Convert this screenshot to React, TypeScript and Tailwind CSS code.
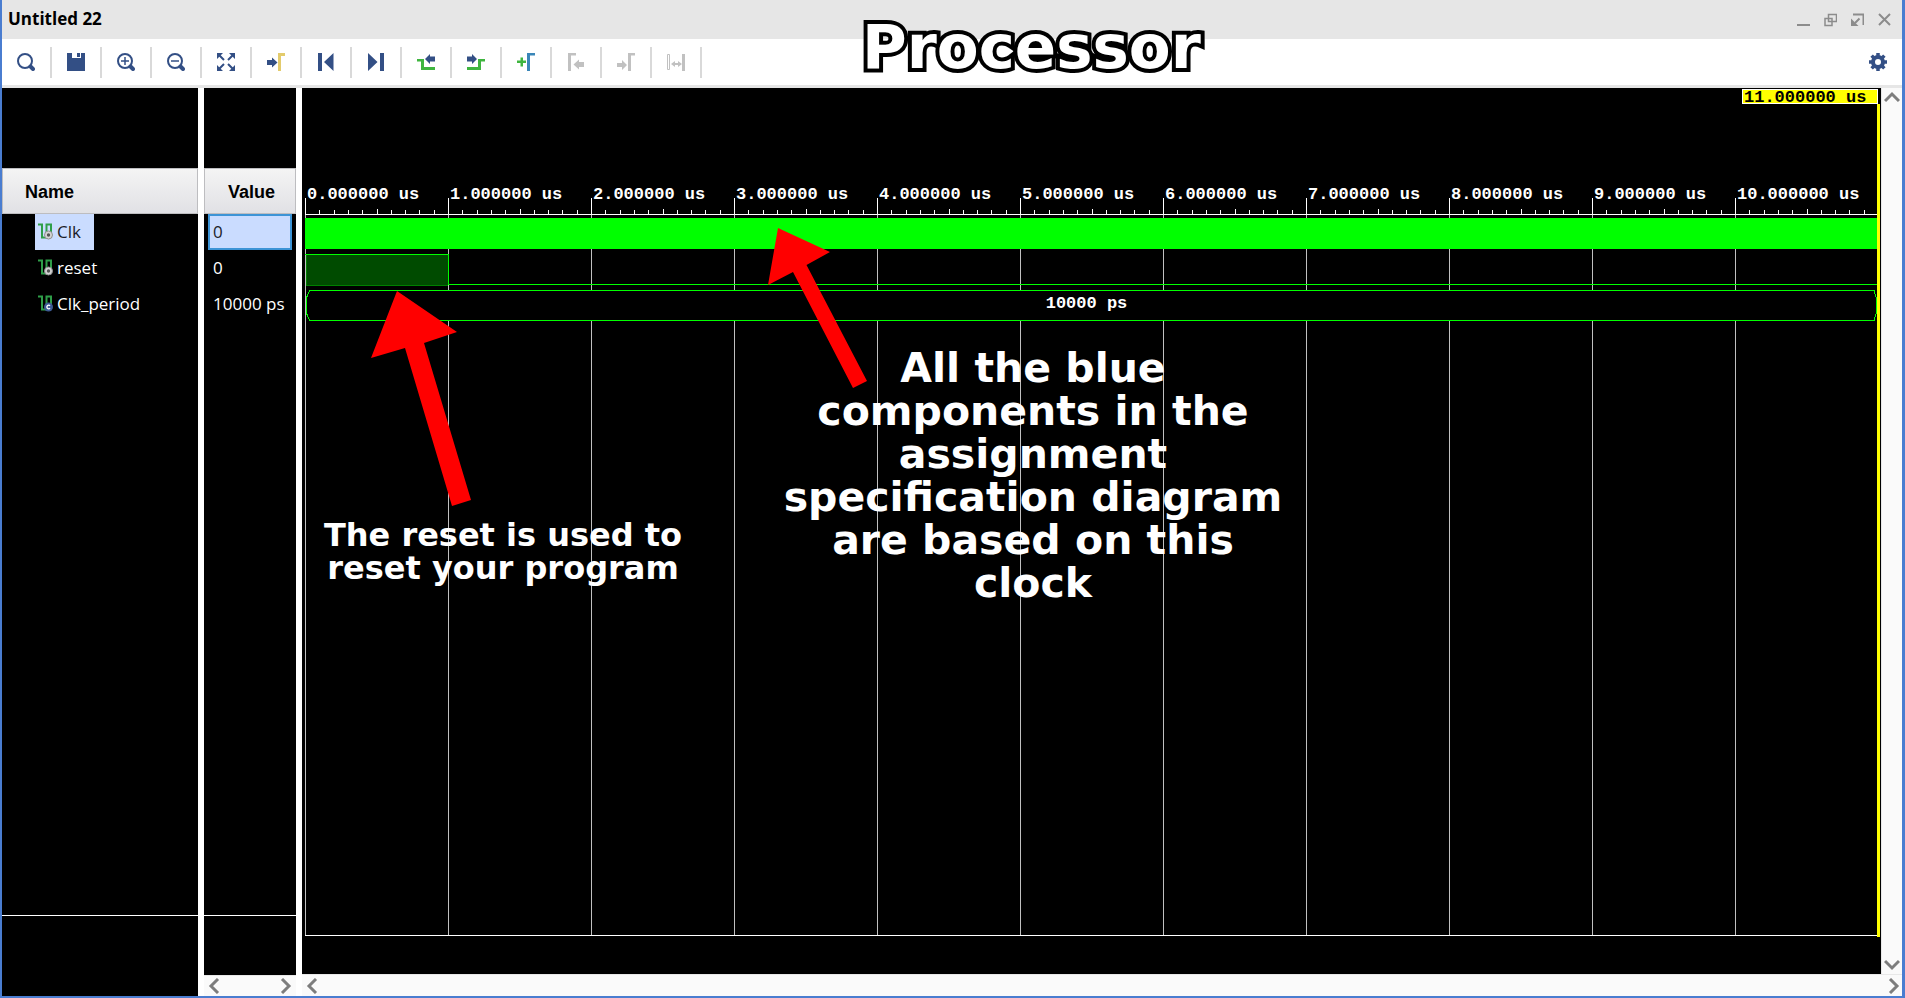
import React from "react";

const NAVY = "#334f85";
const GREEN = "#3fb53f";
const GREY = "#c1c1c1";

const tools: { label: string; icon: React.ReactNode; disabled?: boolean }[] = [
  {
    label: "Search",
    icon: (
      <>
        <circle cx="8" cy="8" r="7" fill="none" stroke={NAVY} strokeWidth="2" />
        <path d="M13.500 13.500l2.500 2.500" stroke={NAVY} strokeWidth="4" strokeLinecap="round" />
      </>
    ),
  },
  {
    label: "Save",
    icon: <path fill={NAVY} fillRule="evenodd" d="M0 0h5v5h9V0h4v18H0zM10 0h3v4h-3z" />,
  },
  {
    label: "Zoom in",
    icon: (
      <>
        <circle cx="8" cy="8" r="7" fill="none" stroke={NAVY} strokeWidth="2" />
        <path d="M8 4v8M4 8h8" stroke={NAVY} strokeWidth="1.500" />
        <path d="M13.500 13.500l2.500 2.500" stroke={NAVY} strokeWidth="4" strokeLinecap="round" />
      </>
    ),
  },
  {
    label: "Zoom out",
    icon: (
      <>
        <circle cx="8" cy="8" r="7" fill="none" stroke={NAVY} strokeWidth="2" />
        <path d="M4 8h8" stroke={NAVY} strokeWidth="1.500" />
        <path d="M13.500 13.500l2.500 2.500" stroke={NAVY} strokeWidth="4" strokeLinecap="round" />
      </>
    ),
  },
  {
    label: "Zoom fit",
    icon: (
      <>
        <path d="M0 0h6L0 6zM18 0h-6l6 6zM0 18h6l-6-6zM18 18h-6l6-6z" fill={NAVY} />
        <path d="M2 2l5 5M16 2l-5 5M2 16l5-5M16 16l-5-5" stroke={NAVY} strokeWidth="2" />
      </>
    ),
  },
  {
    label: "Go to cursor",
    icon: (
      <>
        <path d="M0 7h5V4.500l5.500 5-5.500 5V12H0z" fill={NAVY} />
        <path d="M11 0h7v3h-4v15h-3z" fill="#e3cb6c" />
      </>
    ),
  },
  {
    label: "Go to start",
    icon: <path d="M1 0h4v18H1zM16.500 0v18L7 9z" fill={NAVY} />,
  },
  {
    label: "Go to end",
    icon: <path d="M13 0h4v18h-4zM1 0v18l9.500-9z" fill={NAVY} />,
  },
  {
    label: "Previous transition",
    icon: (
      <>
        <path d="M0 6h7v8h11v3H4V8.500H0z" fill={GREEN} />
        <path d="M18 3.500h-5V1L8 6l5 5V8.500h5z" fill={NAVY} />
      </>
    ),
  },
  {
    label: "Next transition",
    icon: (
      <>
        <path d="M18 6h-7v8H0v3h14V8.500h4z" fill={GREEN} />
        <path d="M0 3.500h5V1l5 5-5 5V8.500H0z" fill={NAVY} />
      </>
    ),
  },
  {
    label: "Add marker",
    icon: (
      <>
        <path d="M3.500 4.500h2.500v3h3V10H6v3.500H3.500V10H0V7.500h3.500z" fill={GREEN} />
        <path d="M10 0h8v2.500h-5V18h-3z" fill="#3a86b8" />
      </>
    ),
  },
  {
    label: "Previous marker",
    disabled: true,
    icon: <path d="M1 0h8v2.500H4V18H1zM17 9v5h-5v2.500L6.500 11.500 12 6.500V9z" fill={GREY} />,
  },
  {
    label: "Next marker",
    disabled: true,
    icon: <path d="M11 0h7v2.500h-4V18h-3zM0 10h5V7l5 5-5 5v-3H0z" fill={GREY} />,
  },
  {
    label: "Swap cursors",
    disabled: true,
    icon: (
      <>
        <path d="M.5 1.500h2v15h-2z" fill="none" stroke={GREY} />
        <path d="M15 1h3v17h-3zM4 11l4-3v2h3V8l4 3-4 3v-2H8v2z" fill={GREY} />
      </>
    ),
  },
];

const windowButtons = [
  { label: "Minimize", icon: <path d="M0 12h13" /> },
  { label: "Restore", icon: <path d="M4.500 1.500h8v7h-8zM1 5.500h7v7H1z" strokeWidth="1.500" /> },
  {
    label: "Float",
    icon: (
      <>
        <path d="M2 1.500h10.500V12M8.500 5.500L4 10" />
        <path d="M0 5.500V13h7.500z" fill="#8c8c8c" stroke="none" />
      </>
    ),
  },
  { label: "Close", icon: <path d="M1 1l11 11M12 1L1 12" /> },
];

const signals = [
  { name: "Clk", value: "0", kind: "signal", selected: true },
  { name: "reset", value: "0", kind: "signal", selected: false },
  { name: "Clk_period", value: "10000 ps", kind: "constant", selected: false },
];

const STEP = 143;
const seconds = Array.from({ length: 11 }, (_, i) => i);

function SignalIcon({ kind }: { kind: string }) {
  return (
    <svg className="block shrink-0" width="16" height="18" viewBox="0 0 16 18" aria-hidden="true">
      <path d="M0 1.500h4v13h4.500v-13H13V9" fill="none" stroke="#2f9e49" strokeWidth="2" />
      {kind === "constant" ? (
        <>
          <circle cx="10.500" cy="12" r="4.500" fill="#3d5a94" />
          <path d="M12 10.800a1.800 1.800 0 1 0 0 2.400" fill="none" stroke="#fff" strokeWidth="1.300" />
        </>
      ) : (
        <>
          <circle cx="10.500" cy="12" r="4" fill="#d4d4d4" stroke="#8f8f8f" />
          <circle cx="10.500" cy="12" r="1.700" fill="#555" />
        </>
      )}
    </svg>
  );
}

function Chevron({ dir }: { dir: "left" | "right" | "up" | "down" }) {
  const d = {
    left: "M10 1L3 8l7 7",
    right: "M6 1l7 7-7 7",
    up: "M1 11l7-7 7 7",
    down: "M1 5l7 7 7-7",
  }[dir];
  return (
    <button type="button" aria-label={`Scroll ${dir}`} className="flex size-5 shrink-0 items-center justify-center">
      <svg width="16" height="16" viewBox="0 0 16 16" fill="none" stroke="#7d7d7d" strokeWidth="3">
        <path d={d} />
      </svg>
    </button>
  );
}

function WavePlot() {
  return (
    <svg className="absolute inset-0 size-full overflow-visible" shapeRendering="crispEdges" role="img" aria-label="Waveforms">
      <clipPath id="plot">
        <rect width="100%" height="100%" />
      </clipPath>
      {seconds.map((s) => (
        <g key={s}>
          <rect x={s * STEP} y="126" width="1" height="100%" fill="#c0c0c0" clipPath="url(#plot)" />
          <rect x={s * STEP} y="110" width="1" height="16" fill="#fff" />
          {[1, 2, 3, 4, 5, 6, 7, 8, 9].map((m) => (
            <rect
              key={m}
              x={Math.round(s * STEP + (m * STEP) / 10)}
              y={m === 5 ? 121 : 122}
              width="1"
              height={m === 5 ? 5 : 4}
              fill="#fff"
            />
          ))}
        </g>
      ))}
      <rect y="126" width="100%" height="1" fill="#fff" />
      <rect y="130" width="100%" height="31" fill="#0f0" />
      <rect x="1" y="166" width="142" height="31" fill="#004b00" />
      <path d="M1 166v31h142" fill="none" stroke="#008000" />
      <rect y="166" width="144" height="1" fill="#0f0" />
      <rect x="143" y="166" width="1" height="31" fill="#0f0" />
      <rect x="143" y="196" width="100%" height="1" fill="#0f0" clipPath="url(#plot)" />
      <rect x="1" y="202" width="100%" height="31" fill="#000" clipPath="url(#plot)" />
      <rect x="4" y="202" width="100%" height="1" fill="#0f0" clipPath="url(#plot)" />
      <rect x="4" y="232" width="100%" height="1" fill="#0f0" clipPath="url(#plot)" />
      <path d="M4.500 202.500L1 211v13l3.500 8.500" fill="none" stroke="#0f0" />
      <svg x="100%" overflow="visible">
        <path d="M-5 202h5v31h-5z" fill="#000" />
        <path d="M-6 202.500L-3.500 211v13l-2.500 8.500" fill="none" stroke="#0f0" />
      </svg>
    </svg>
  );
}

export default function App() {
  return (
    <main className="relative flex min-h-screen flex-col border-r-3 border-b-2 border-l-2 border-[#4a7dd0] bg-white font-['Open_Sans','Noto_Sans',sans-serif] text-black">
      <header className="flex h-[39px] items-center justify-between bg-[#e6e6e6] pr-[11px] pl-[6px]">
        <h1 className="pb-[2px] text-[17px] leading-6 font-bold">Untitled 22</h1>
        <div className="flex gap-[14px]">
          {windowButtons.map((b) => (
            <button key={b.label} type="button" aria-label={b.label}>
              <svg className="block" width="13" height="14" viewBox="0 0 13 14" fill="none" stroke="#8c8c8c" strokeWidth="2">
                {b.icon}
              </svg>
            </button>
          ))}
        </div>
      </header>

      <div role="toolbar" aria-label="Waveform tools" className="flex h-[49px] items-center border-b-3 border-[#e6e6e6]">
        {tools.map((t) => (
          <button
            key={t.label}
            type="button"
            aria-label={t.label}
            disabled={t.disabled}
            className="flex h-[31px] w-[50px] items-center justify-center border-r-2 border-[#d9d9d9]"
          >
            <svg width="18" height="18" viewBox="0 0 18 18">
              {t.icon}
            </svg>
          </button>
        ))}
        <button type="button" aria-label="Settings" className="mr-[15px] ml-auto">
          <svg className="block" width="18" height="18" viewBox="-9 -9 18 18">
            <circle r="5" fill="none" stroke={NAVY} strokeWidth="4" />
            {[0, 45, 90, 135].map((a) => (
              <path key={a} d="M0-9v4M0 5v4" stroke={NAVY} strokeWidth="3.500" transform={`rotate(${a})`} />
            ))}
          </svg>
        </button>
      </div>

      <div className="flex flex-1">
        <section aria-label="Names" className="flex w-[196px] shrink-0 flex-col bg-black pt-20">
          <table className="w-full border-separate border-spacing-0 text-[17px] text-white">
            <thead>
              <tr>
                <th className="h-[46px] border border-[#bdbdc0] bg-linear-to-b from-[#f4f4f4] to-[#e1e1e5] pt-[2px] pb-0 pl-[22px] text-left font-['Liberation_Sans',sans-serif] text-[18px] font-bold text-black">
                  Name
                </th>
              </tr>
            </thead>
            <tbody>
              {signals.map((s) => (
                <tr key={s.name}>
                  <td className="h-9 p-0 pl-[33px]">
                    <span
                      className={
                        s.selected
                          ? "flex h-9 w-[59px] items-center gap-[3px] bg-[#cadcff] pl-[3px] text-[#1c1c28]"
                          : "flex h-9 items-center gap-[3px] pl-[3px]"
                      }
                    >
                      <SignalIcon kind={s.kind} />
                      {s.name}
                    </span>
                  </td>
                </tr>
              ))}
            </tbody>
          </table>
          <div className="mt-auto h-[81px] border-t border-white" />
        </section>

        <section aria-label="Values" className="ml-[6px] flex w-[92px] shrink-0 flex-col bg-black pt-20">
          <table className="w-full border-separate border-spacing-0 text-[17px] text-white">
            <thead>
              <tr>
                <th className="h-[46px] border border-[#bdbdc0] bg-linear-to-b from-[#f4f4f4] to-[#e1e1e5] pt-[2px] pr-0 pb-0 pl-[3px] font-['Liberation_Sans',sans-serif] text-[18px] font-bold text-black">
                  Value
                </th>
              </tr>
            </thead>
            <tbody>
              {signals.map((s) => (
                <tr key={s.name}>
                  <td className="h-9 px-1 py-0">
                    <span
                      className={
                        s.selected
                          ? "flex h-9 items-center border-2 border-[#3d94d6] bg-[#cadcff] pl-[3px] text-[#1c1c28]"
                          : "flex h-9 items-center pl-[5px] whitespace-nowrap"
                      }
                    >
                      {s.value}
                    </span>
                  </td>
                </tr>
              ))}
            </tbody>
          </table>
          <div className="mt-auto h-[60px] border-t border-white" />
          <div className="flex h-[21px] items-center justify-between border-t border-[#e8e8e8] bg-[#fafafa] px-[2px]">
            <Chevron dir="left" />
            <Chevron dir="right" />
          </div>
        </section>

        <section aria-label="Waveform" className="ml-[6px] flex min-w-0 flex-1 flex-col">
          <div className="flex flex-1">
            <div className="flex min-w-0 flex-1 flex-col bg-black pr-px pb-[38px] pl-[3px] font-['Liberation_Mono','Courier_New',monospace] text-[17px] leading-5 font-bold text-white">
              <div className="relative flex-1 border-b border-white">
                <WavePlot />
                <div className="absolute top-4 right-0 -bottom-[2px] w-[3px] bg-[#ff0]" />
                <div className="relative flex h-4 justify-end pr-[2px]">
                  <span className="mt-px h-[15px] w-[136px] border border-white bg-[#ff0] pl-px leading-4 whitespace-nowrap text-black">
                    11.000000 us
                  </span>
                </div>
                <div className="relative flex overflow-hidden pt-[81px]">
                  {seconds.map((s) => (
                    <span key={s} className="w-[143px] shrink-0 pl-[2px] whitespace-nowrap">
                      {s}.000000 us
                    </span>
                  ))}
                </div>
                <div className="relative pt-[89px] pr-3 text-center">10000 ps</div>
              </div>
            </div>
            <div className="flex w-[21px] flex-col items-center justify-between border-l border-[#e8e8e8] bg-[#fafafa]">
              <Chevron dir="up" />
              <Chevron dir="down" />
            </div>
          </div>
          <div className="flex h-[22px] items-center justify-between border-t border-[#e8e8e8] bg-[#fafafa] pl-[2px]">
            <Chevron dir="left" />
            <Chevron dir="right" />
          </div>
        </section>
      </div>

      <div className="pointer-events-none absolute inset-0 overflow-hidden font-['DejaVu_Sans',sans-serif] font-bold text-white">
        <svg className="absolute top-0 left-0 size-full" fill="#f00" aria-hidden="true">
          <path d="M395 291L455 332 422 343 469 500 450 506 403 348 369 358z" />
          <path d="M776 228L828 252 804.500 265 865 381 851 388 791 272 766 285z" />
        </svg>
        <p className="absolute top-[9px] left-[860px] text-[61px] leading-[76px] [-webkit-text-stroke:8px_black] [paint-order:stroke_fill]">
          Processor
        </p>
        <p className="absolute top-[519px] left-[301px] w-[400px] text-center text-[32px] leading-[33px] whitespace-nowrap">
          The reset is used to
          <br />
          reset your program
        </p>
        <p className="absolute top-[347px] left-[731px] w-[600px] text-center text-[41px] leading-[43px] whitespace-nowrap">
          All the blue
          <br />
          components in the
          <br />
          assignment
          <br />
          specification diagram
          <br />
          are based on this
          <br />
          clock
        </p>
      </div>
    </main>
  );
}
